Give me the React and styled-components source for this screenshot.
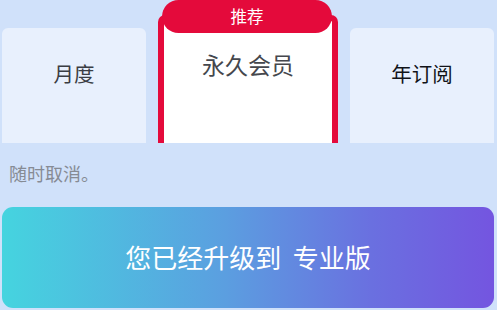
import React from "react";
import styled, { createGlobalStyle } from "styled-components";

const GlobalStyle = createGlobalStyle`
  html, body {
    margin: 0;
    padding: 0;
    background: #d0e1fa;
    font-family: "Noto Sans CJK SC", "Noto Sans", sans-serif;
  }
`;

const plans = [
  { id: "month", label: "月度", color: "#3a3d44" },
  { id: "forever", label: "永久会员", featured: true },
  { id: "year", label: "年订阅", color: "#111318" },
];

const Page = styled.div`
  width: 497px;
  height: 310px;
  padding: 0 3px 0 2px;
  box-sizing: border-box;
  overflow: hidden;
`;

const PlanRow = styled.div`
  display: grid;
  grid-template-columns: 144px 1fr 144px;
  column-gap: 12px;
  align-items: start;
  height: 143px;
  padding-top: 28px;
  box-sizing: border-box;
  overflow: hidden;
`;

const PlanCard = styled.div`
  height: 160px;
  background: #e8f0fd;
  border-radius: 6px 6px 0 0;
  display: flex;
  justify-content: center;
  padding-top: 30px;
  box-sizing: border-box;
  font-size: 20.5px;
  color: ${(p) => p.$color || "#333"};
`;

const FeaturedCard = styled.div`
  position: relative;
  margin-top: -13px;
  height: 170px;
  background: #fff;
  border: 6px solid #e40a3b;
  border-bottom: none;
  border-radius: 7px 7px 0 0;
  display: flex;
  justify-content: center;
  padding-top: 26px;
  box-sizing: border-box;
  font-size: 23px;
  color: #45474d;
`;

const Badge = styled.div`
  position: absolute;
  top: -21px;
  left: -2px;
  right: 0;
  height: 33px;
  border-radius: 17px;
  background: #e40a3b;
  color: #fff;
  font-size: 16.5px;
  display: flex;
  align-items: center;
  justify-content: center;
  padding-bottom: 2px;
  box-sizing: border-box;
`;

const Note = styled.div`
  padding: 17px 0 0 7px;
  height: 64px;
  box-sizing: border-box;
  font-size: 18px;
  color: #868b94;
`;

const UpgradeButton = styled.button`
  width: 100%;
  height: 101px;
  border: none;
  border-radius: 11px;
  background: linear-gradient(90deg, #45d4df 0%, #5b9fe0 45%, #6a70e0 75%, #7455e0 100%);
  color: #fff;
  font-family: inherit;
  font-size: 26px;
  display: flex;
  align-items: center;
  justify-content: center;
  padding: 0 0 2px 0;
  white-space: pre;
`;

export default function App() {
  return (
    <Page>
      <GlobalStyle />
      <PlanRow>
        {plans.map((plan) =>
          plan.featured ? (
            <FeaturedCard key={plan.id}>
              <Badge>推荐</Badge>
              {plan.label}
            </FeaturedCard>
          ) : (
            <PlanCard key={plan.id} $color={plan.color}>
              {plan.label}
            </PlanCard>
          )
        )}
      </PlanRow>
      <Note>随时取消。</Note>
      <UpgradeButton>{"您已经升级到  专业版"}</UpgradeButton>
    </Page>
  );
}
